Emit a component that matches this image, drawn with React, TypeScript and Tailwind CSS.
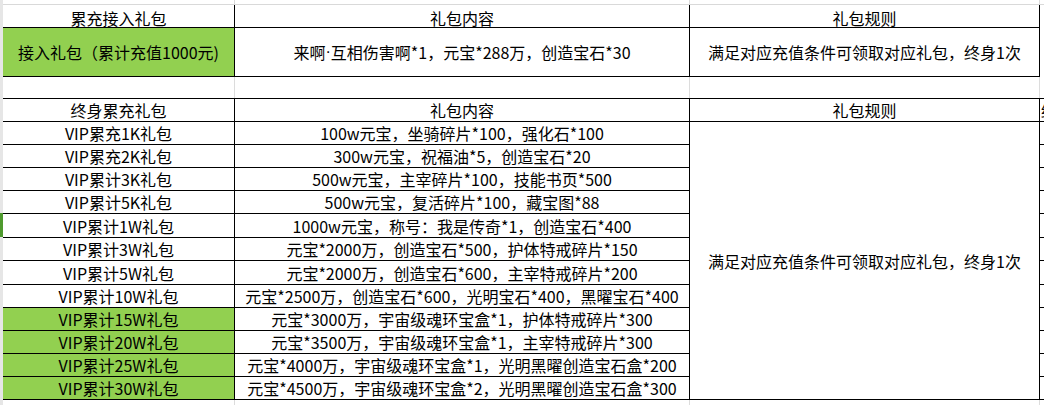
const green = 'bg-[#92d050]';

type Row = { name: string; content: string; hi?: boolean; h: string };

const rows: Row[] = [
  { name: 'VIP累充1K礼包', content: '100w元宝，坐骑碎片*100，强化石*100', h: 'h-[23px]' },
  { name: 'VIP累充2K礼包', content: '300w元宝，祝福油*5，创造宝石*20', h: 'h-[23px]' },
  { name: 'VIP累计3K礼包', content: '500w元宝，主宰碎片*100，技能书页*500', h: 'h-[23px]' },
  { name: 'VIP累计5K礼包', content: '500w元宝，复活碎片*100，藏宝图*88', h: 'h-[23px]' },
  { name: 'VIP累计1W礼包', content: '1000w元宝，称号：我是传奇*1，创造宝石*400', h: 'h-[24px]' },
  { name: 'VIP累计3W礼包', content: '元宝*2000万，创造宝石*500，护体特戒碎片*150', h: 'h-[23px]' },
  { name: 'VIP累计5W礼包', content: '元宝*2000万，创造宝石*600，主宰特戒碎片*200', h: 'h-[24px]' },
  { name: 'VIP累计10W礼包', content: '元宝*2500万，创造宝石*600，光明宝石*400，黑曜宝石*400', h: 'h-[23px]' },
  { name: 'VIP累计15W礼包', content: '元宝*3000万，宇宙级魂环宝盒*1，护体特戒碎片*300', hi: true, h: 'h-[23px]' },
  { name: 'VIP累计20W礼包', content: '元宝*3500万，宇宙级魂环宝盒*1，主宰特戒碎片*300', hi: true, h: 'h-[23px]' },
  { name: 'VIP累计25W礼包', content: '元宝*4000万，宇宙级魂环宝盒*1，光明黑曜创造宝石盒*200', hi: true, h: 'h-[23px]' },
  { name: 'VIP累计30W礼包', content: '元宝*4500万，宇宙级魂环宝盒*2，光明黑曜创造宝石盒*300', hi: true, h: 'h-[23px]' },
];

const rule = '满足对应充值条件可领取对应礼包，终身1次';

export default function App() {
  return (
    <div
      className="w-[1044px] h-[405px] overflow-hidden bg-white flex text-[16px] leading-[20px] text-black"
      style={{ fontFamily: '"Noto Sans CJK SC", "Noto Sans", sans-serif' }}
    >
      {/* row header strip */}
      <div className="w-[3px] flex flex-col shrink-0">
        <div className="h-[213px] bg-[#e6e6e6]" />
        <div className="h-[24px] bg-[#4f9a2f]" />
        <div className="flex-1 bg-[#e6e6e6]" />
      </div>

      <div className="flex-1 flex flex-col">
        {/* top gridline */}
        <div className="h-[5px] flex border-b border-[#d9d9d9]">
          <div className="w-[232px] border-r border-[#d9d9d9]" />
          <div className="w-[455px] border-r border-[#d9d9d9]" />
          <div className="w-[350px] border-r border-[#d9d9d9]" />
        </div>

        {/* 累充接入礼包 header */}
        <div className="h-[23px] flex">
          <div className="w-[232px] border-r border-b border-black flex items-center justify-center pt-[3px]">累充接入礼包</div>
          <div className="w-[455px] border-r border-b border-black flex items-center justify-center pt-[3px]">礼包内容</div>
          <div className="w-[350px] border-r border-b border-black flex items-center justify-center pt-[3px]">礼包规则</div>
          <div className="flex-1" />
        </div>
        <div className="h-[49px] flex">
          <div className={`w-[232px] border-r border-b border-black flex items-center justify-center ${green}`}>
            接入礼包（累计充值1000元)
          </div>
          <div className="w-[455px] border-r border-b border-black flex items-center justify-center whitespace-nowrap">
            来啊<span style={{ fontFamily: '"Liberation Sans", sans-serif' }}>·</span>互相伤害啊*1，元宝*288万，创造宝石*30
          </div>
          <div className="w-[350px] border-r border-b border-black flex items-center justify-center">{rule}</div>
          <div className="flex-1" />
        </div>

        {/* blank row */}
        <div className="h-[22px] flex border-b border-black">
          <div className="w-[232px] border-r border-[#dcdcdc]" />
          <div className="w-[455px] border-r border-[#dcdcdc]" />
          <div className="w-[350px] border-r border-[#dcdcdc]" />
          <div className="flex-1" />
        </div>

        {/* 终身累充礼包 header */}
        <div className="h-[23px] flex">
          <div className="w-[232px] border-r border-b border-black flex items-center justify-center">终身累充礼包</div>
          <div className="w-[455px] border-r border-b border-black flex items-center justify-center">礼包内容</div>
          <div className="w-[350px] border-r border-b border-black flex items-center justify-center">礼包规则</div>
          <div className="flex-1 border-b border-black overflow-hidden whitespace-nowrap pl-[1px] flex items-center">终身累充</div>
        </div>

        {/* data rows */}
        <div className="flex">
          <div className="w-[687px] flex flex-col">
            {rows.map(r => (
              <div key={r.name} className={`flex ${r.h}`}>
                <div
                  className={`w-[232px] border-r border-b border-black flex items-center justify-center whitespace-nowrap ${r.hi ? green : ''}`}
                >
                  {r.name}
                </div>
                <div className="w-[455px] border-r border-b border-black flex items-center justify-center whitespace-nowrap">
                  {r.content}
                </div>
              </div>
            ))}
          </div>
          <div className="w-[350px] border-r border-b border-black flex items-center justify-center whitespace-nowrap">
            {rule}
          </div>
          <div className="flex-1 flex flex-col">
            {rows.map(r => (
              <div key={r.name} className={`${r.h} border-b border-black`} />
            ))}
          </div>
        </div>

        {/* bottom gridlines */}
        <div className="flex-1 flex">
          <div className="w-[232px] border-r border-[#dcdcdc]" />
          <div className="w-[455px] border-r border-[#dcdcdc]" />
          <div className="w-[350px] border-r border-[#dcdcdc]" />
        </div>
      </div>
    </div>
  );
}
